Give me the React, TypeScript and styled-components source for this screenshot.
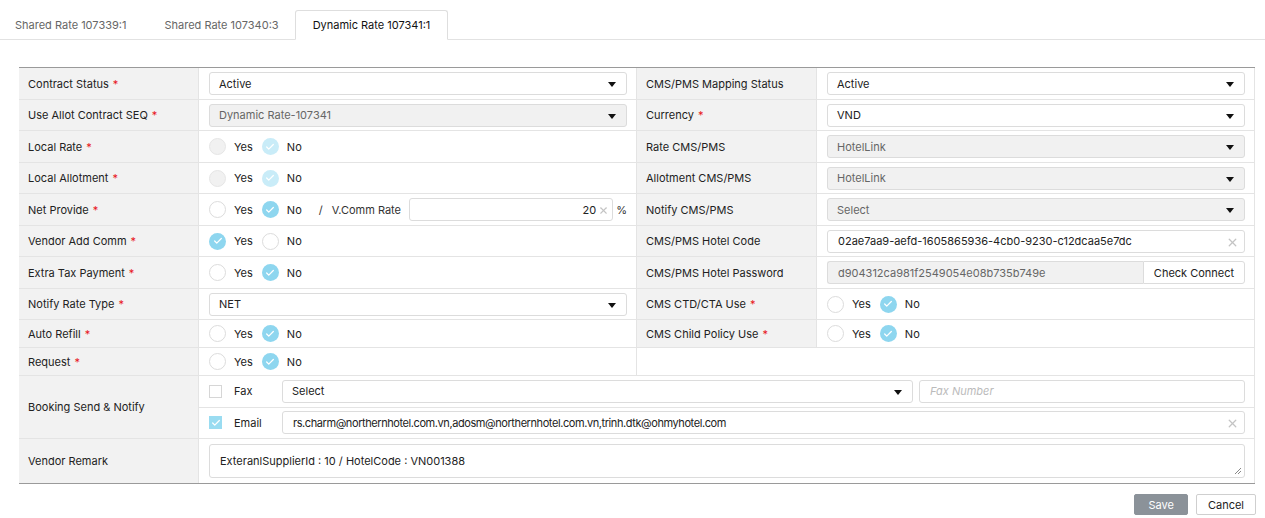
import React from "react";
import styled, { createGlobalStyle, css } from "styled-components";
import { Check, X } from "lucide-react";

const GlobalStyle = createGlobalStyle`
  body {
    margin: 0;
    background: #fff;
    font-family: Inter, "Noto Sans", sans-serif;
    color: #222;
  }
  * { box-sizing: border-box; }
`;

const Page = styled.div`
  width: 1265px;
  padding-top: 10px;
`;

const TabBar = styled.div`
  display: flex;
  height: 30px;
  border-bottom: 1px solid #e2e2e2;
`;

const Tab = styled.div<{ $active?: boolean }>`
  display: flex;
  align-items: center;
  padding: 0 19px;
  font-size: 11px;
  color: #666;
  &:first-child { padding-left: 15px; }
  ${(p) =>
    p.$active &&
    css`
      color: #111;
      background: #fff;
      border: 1px solid #dedede;
      border-bottom: 1px solid #fff;
      border-radius: 3px 3px 0 0;
      margin-bottom: -1px;
      margin-left: -3px;
      height: 30px;
      padding: 0 17px;
    `}
`;

const Form = styled.div`
  margin: 27px 10px 0 19px;
  display: grid;
  grid-template-columns: 180px 1fr 180px 1fr;
  grid-template-rows: 32px 31px 32px 31px 32px 31px 32px 31px 28px 28px 63px 44px;
  border-top: 1px solid #9a9a9a;
  border-bottom: 1px solid #9a9a9a;
`;

const Cell = styled.div<{ $span?: number; $last?: boolean }>`
  display: flex;
  align-items: center;
  border-right: 1px solid #e4e4e4;
  border-bottom: ${(p) => (p.$last ? "none" : "1px solid #e4e4e4")};
  grid-column: span ${(p) => p.$span ?? 1};
  min-width: 0;
`;

const LabelCell = styled(Cell)`
  background: #f2f2f2;
  padding: 0 9px;
  font-size: 11px;
  color: #222;
`;

const ValueCell = styled(Cell)`
  padding: 0 9px 0 10px;
  font-size: 11px;
  color: #333;
`;

const Star = styled.span`
  color: #e8141a;
  margin-left: 4px;
`;

const SelectBox = styled.div<{ $disabled?: boolean }>`
  position: relative;
  flex: 1;
  height: 23px;
  display: flex;
  align-items: center;
  padding: 0 9px;
  border: 1px solid #dcdcdc;
  border-radius: 3px;
  font-size: 11px;
  background: ${(p) => (p.$disabled ? "#f1f1f1" : "#fff")};
  color: ${(p) => (p.$disabled ? "#666" : "#222")};
  &::after {
    content: "";
    position: absolute;
    right: 10px;
    top: 9px;
    border-left: 4.5px solid transparent;
    border-right: 4.5px solid transparent;
    border-top: 5px solid #111;
  }
`;

const InputBox = styled.div<{ $disabled?: boolean; $align?: string; $tight?: boolean }>`
  position: relative;
  flex: 1;
  height: 23px;
  display: flex;
  align-items: center;
  justify-content: ${(p) => p.$align ?? "flex-start"};
  padding: 0 22px 0 10px;
  border: 1px solid #dcdcdc;
  border-radius: 3px;
  font-size: 11px;
  letter-spacing: ${(p) => (p.$tight ? "-0.42px" : "normal")};
  background: ${(p) => (p.$disabled ? "#f1f1f1" : "#fff")};
  color: ${(p) => (p.$disabled ? "#666" : "#222")};
  white-space: nowrap;
  overflow: hidden;
`;

const CommInput = styled(InputBox)`
  margin-left: 8px;
  padding-right: 16px;
`;

const Placeholder = styled.span`
  color: #bbb;
  font-style: italic;
`;

const ClearIcon = styled.span<{ $small?: boolean }>`
  position: absolute;
  right: ${(p) => (p.$small ? "3px" : "5px")};
  top: ${(p) => (p.$small ? "6px" : "5px")};
  display: flex;
  color: #c4c4c4;
`;

const RadioDot = styled.span<{ $checked?: boolean; $disabled?: boolean }>`
  width: 17px;
  height: 17px;
  border-radius: 50%;
  display: inline-flex;
  align-items: center;
  justify-content: center;
  flex: none;
  border: 1px solid #dcdcdc;
  background: #fff;
  color: #fff;
  ${(p) =>
    p.$disabled &&
    css`
      background: #f1f1f1;
      border-color: #e6e6e6;
    `}
  ${(p) =>
    p.$checked &&
    css`
      border: none;
      background: ${p.$disabled ? "#c9ecf8" : "#8ed6ef"};
    `}
`;

const OptionText = styled.span`
  margin: 0 9px 0 8px;
  color: #222;
`;

const Slash = styled.span`
  margin: 0 9px 0 8px;
`;

const Unit = styled.span`
  margin-left: 3px;
`;

const CheckBoxSquare = styled.span<{ $checked?: boolean }>`
  width: 13px;
  height: 13px;
  display: inline-flex;
  align-items: center;
  justify-content: center;
  flex: none;
  border: 1px solid ${(p) => (p.$checked ? "#9adcf1" : "#d6d6d6")};
  background: ${(p) => (p.$checked ? "#9adcf1" : "#fff")};
  color: #fff;
`;

const BoxLabel = styled.span`
  width: 48px;
  margin-left: 12px;
  color: #222;
`;

const SubRows = styled(Cell)`
  flex-direction: column;
  align-items: stretch;
`;

const SubRow = styled.div<{ $last?: boolean }>`
  flex: 1;
  display: flex;
  align-items: center;
  padding: 0 9px 0 10px;
  font-size: 11px;
  border-bottom: ${(p) => (p.$last ? "none" : "1px solid #e4e4e4")};
`;

const FaxSelect = styled(SelectBox)`
  flex: 0 0 631px;
  margin-right: 6px;
`;

const TextArea = styled.div`
  position: relative;
  flex: 1;
  height: 34px;
  border: 1px solid #dcdcdc;
  border-radius: 3px;
  padding: 0 10px;
  display: flex;
  align-items: center;
  font-size: 11px;
  color: #222;
`;

const ResizeGrip = styled.svg`
  position: absolute;
  right: 2px;
  bottom: 2px;
`;

const PasswordGroup = styled.div`
  flex: 1;
  display: flex;
  height: 23px;
`;

const PasswordField = styled.div`
  flex: 1;
  display: flex;
  align-items: center;
  padding: 0 10px;
  background: #f1f1f1;
  border: 1px solid #dcdcdc;
  border-right: none;
  border-radius: 3px 0 0 3px;
  color: #666;
`;

const AddonButton = styled.div`
  width: 102px;
  display: flex;
  align-items: center;
  justify-content: center;
  border: 1px solid #dcdcdc;
  border-radius: 0 3px 3px 0;
  background: #fff;
  color: #222;
`;

const Footer = styled.div`
  display: flex;
  justify-content: flex-end;
  gap: 8px;
  margin: 10px 9px 0 0;
`;

const Button = styled.div<{ $primary?: boolean }>`
  height: 21px;
  padding: 0 ${(p) => (p.$primary ? "13px" : "11px")};
  display: flex;
  align-items: center;
  border-radius: 2px;
  font-size: 11px;
  ${(p) =>
    p.$primary
      ? css`
          background: #8b9299;
          color: #fff;
          border: 1px solid #8b9299;
        `
      : css`
          background: #fff;
          color: #222;
          border: 1px solid #cfcfcf;
        `}
`;

type Choice = "yes" | "no" | null;

const Radios = ({ value, disabled }: { value: Choice; disabled?: boolean }) => (
  <>
    <RadioDot $checked={value === "yes"} $disabled={disabled}>
      {value === "yes" && <Check size={10} strokeWidth={3} />}
    </RadioDot>
    <OptionText>Yes</OptionText>
    <RadioDot $checked={value === "no"} $disabled={disabled}>
      {value === "no" && <Check size={10} strokeWidth={3} />}
    </RadioDot>
    <OptionText>No</OptionText>
  </>
);

const Label = ({ text, required, last }: { text: string; required?: boolean; last?: boolean }) => (
  <LabelCell $last={last}>
    {text}
    {required && <Star>*</Star>}
  </LabelCell>
);

const Clear = ({ small }: { small?: boolean }) => (
  <ClearIcon $small={small}>
    <X size={small ? 11 : 13} strokeWidth={2.4} />
  </ClearIcon>
);

export default function App() {
  return (
    <Page>
      <GlobalStyle />
      <TabBar>
        <Tab>Shared Rate 107339:1</Tab>
        <Tab>Shared Rate 107340:3</Tab>
        <Tab $active>Dynamic Rate 107341:1</Tab>
      </TabBar>

      <Form>
        <Label text="Contract Status" required />
        <ValueCell>
          <SelectBox>Active</SelectBox>
        </ValueCell>
        <Label text="CMS/PMS Mapping Status" />
        <ValueCell>
          <SelectBox>Active</SelectBox>
        </ValueCell>

        <Label text="Use Allot Contract SEQ" required />
        <ValueCell>
          <SelectBox $disabled>Dynamic Rate-107341</SelectBox>
        </ValueCell>
        <Label text="Currency" required />
        <ValueCell>
          <SelectBox>VND</SelectBox>
        </ValueCell>

        <Label text="Local Rate" required />
        <ValueCell>
          <Radios value="no" disabled />
        </ValueCell>
        <Label text="Rate CMS/PMS" />
        <ValueCell>
          <SelectBox $disabled>HotelLink</SelectBox>
        </ValueCell>

        <Label text="Local Allotment" required />
        <ValueCell>
          <Radios value="no" disabled />
        </ValueCell>
        <Label text="Allotment CMS/PMS" />
        <ValueCell>
          <SelectBox $disabled>HotelLink</SelectBox>
        </ValueCell>

        <Label text="Net Provide" required />
        <ValueCell>
          <Radios value="no" />
          <Slash>/</Slash>
          <span>V.Comm Rate</span>
          <CommInput $align="flex-end">
            20
            <Clear small />
          </CommInput>
          <Unit>%</Unit>
        </ValueCell>
        <Label text="Notify CMS/PMS" />
        <ValueCell>
          <SelectBox $disabled>Select</SelectBox>
        </ValueCell>

        <Label text="Vendor Add Comm" required />
        <ValueCell>
          <Radios value="yes" />
        </ValueCell>
        <Label text="CMS/PMS Hotel Code" />
        <ValueCell>
          <InputBox>
            02ae7aa9-aefd-1605865936-4cb0-9230-c12dcaa5e7dc
            <Clear />
          </InputBox>
        </ValueCell>

        <Label text="Extra Tax Payment" required />
        <ValueCell>
          <Radios value="no" />
        </ValueCell>
        <Label text="CMS/PMS Hotel Password" />
        <ValueCell>
          <PasswordGroup>
            <PasswordField>d904312ca981f2549054e08b735b749e</PasswordField>
            <AddonButton>Check Connect</AddonButton>
          </PasswordGroup>
        </ValueCell>

        <Label text="Notify Rate Type" required />
        <ValueCell>
          <SelectBox>NET</SelectBox>
        </ValueCell>
        <Label text="CMS CTD/CTA Use" required />
        <ValueCell>
          <Radios value="no" />
        </ValueCell>

        <Label text="Auto Refill" required />
        <ValueCell>
          <Radios value="no" />
        </ValueCell>
        <Label text="CMS Child Policy Use" required />
        <ValueCell>
          <Radios value="no" />
        </ValueCell>

        <Label text="Request" required />
        <ValueCell>
          <Radios value="no" />
        </ValueCell>
        <ValueCell $span={2} />

        <Label text="Booking Send & Notify" />
        <SubRows $span={3}>
          <SubRow>
            <CheckBoxSquare />
            <BoxLabel>Fax</BoxLabel>
            <FaxSelect>Select</FaxSelect>
            <InputBox>
              <Placeholder>Fax Number</Placeholder>
            </InputBox>
          </SubRow>
          <SubRow $last>
            <CheckBoxSquare $checked>
              <Check size={10} strokeWidth={3} />
            </CheckBoxSquare>
            <BoxLabel>Email</BoxLabel>
            <InputBox $tight>
              rs.charm@northernhotel.com.vn,adosm@northernhotel.com.vn,trinh.dtk@ohmyhotel.com
              <Clear />
            </InputBox>
          </SubRow>
        </SubRows>

        <Label text="Vendor Remark" last />
        <ValueCell $span={3} $last>
          <TextArea>
            ExteranlSupplierId : 10 / HotelCode : VN001388
            <ResizeGrip width="8" height="8" viewBox="0 0 8 8">
              <path d="M7 1 L1 7 M7 4 L4 7" stroke="#888" strokeWidth="1" />
            </ResizeGrip>
          </TextArea>
        </ValueCell>
      </Form>

      <Footer>
        <Button $primary>Save</Button>
        <Button>Cancel</Button>
      </Footer>
    </Page>
  );
}
